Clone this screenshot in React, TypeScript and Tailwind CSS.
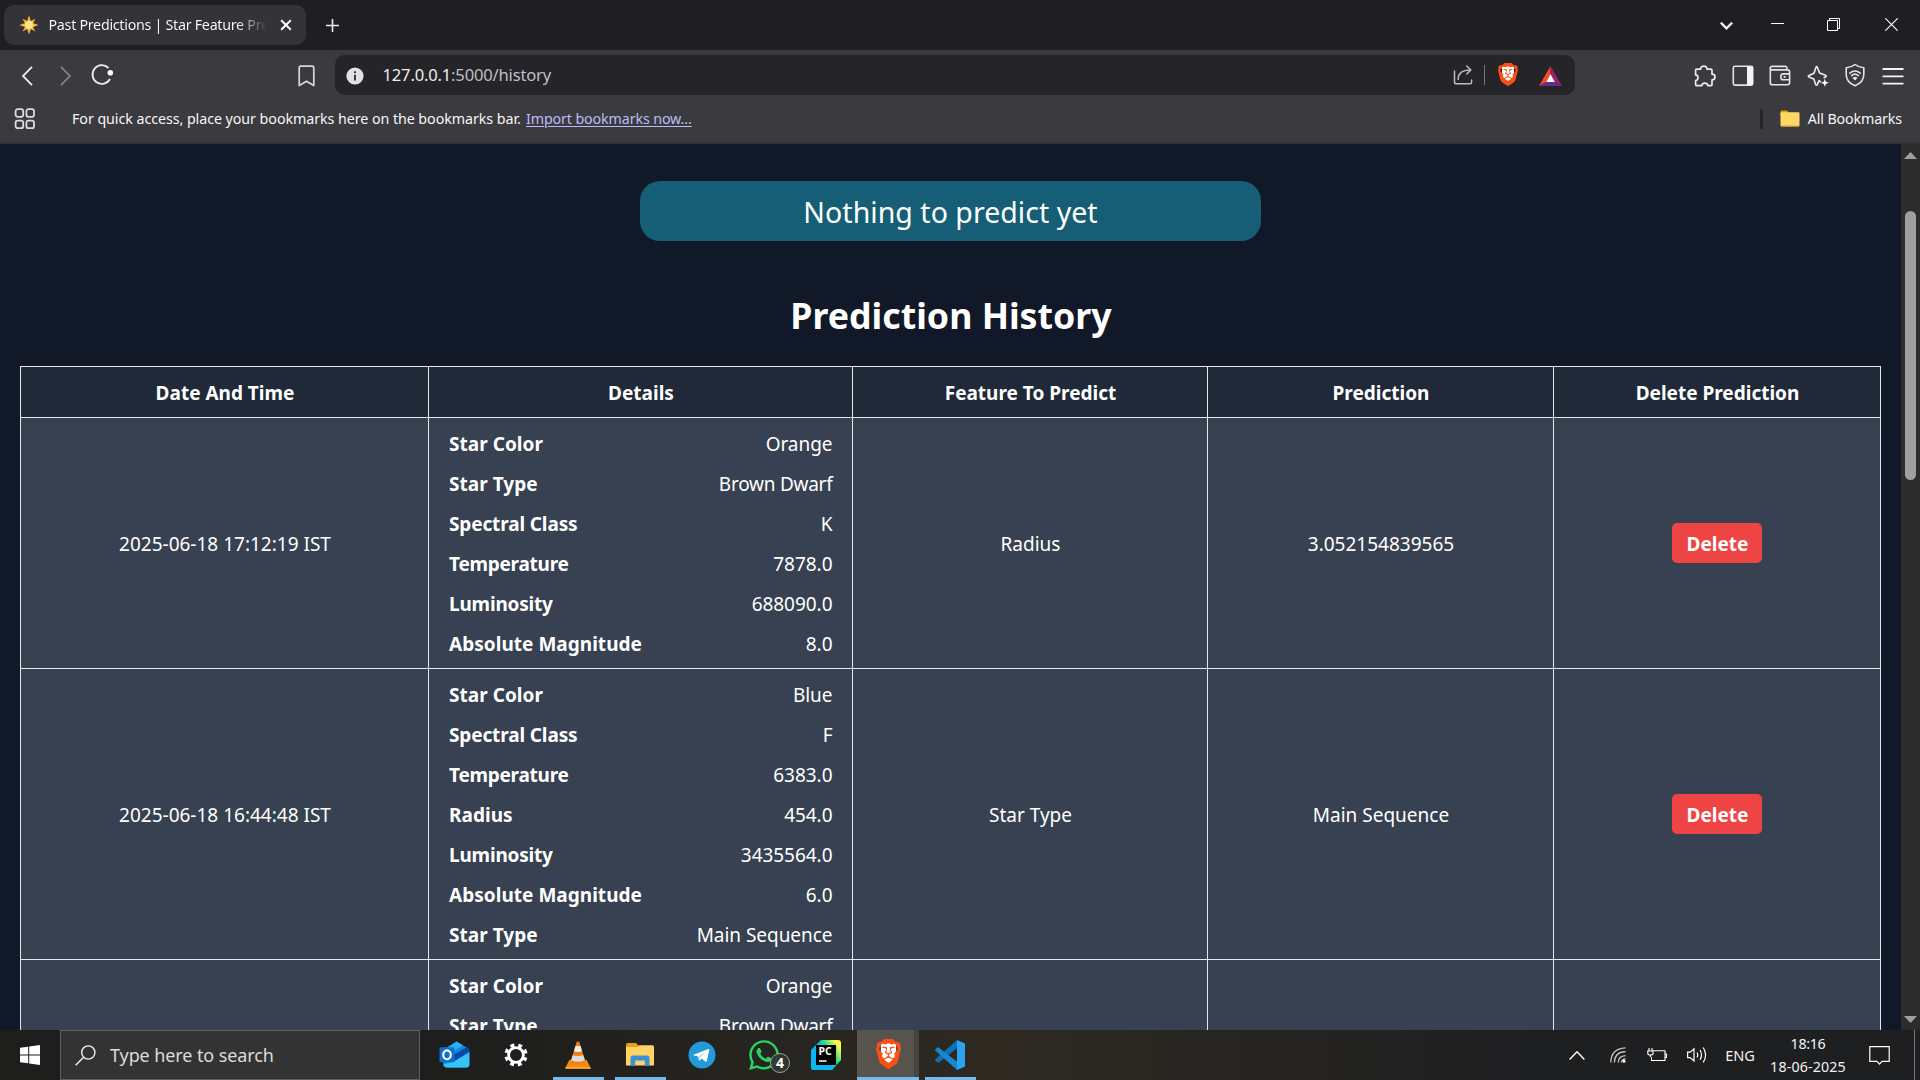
import type { ReactNode } from 'react';
import { SiBrave } from 'react-icons/si';
import { FaWhatsapp } from 'react-icons/fa';

type Detail = [label: string, value: string];

interface Prediction {
  time: string;
  details: Detail[];
  feature: string;
  result: string;
}

const predictions: Prediction[] = [
  {
    time: '2025-06-18 17:12:19 IST',
    details: [
      ['Star Color', 'Orange'],
      ['Star Type', 'Brown Dwarf'],
      ['Spectral Class', 'K'],
      ['Temperature', '7878.0'],
      ['Luminosity', '688090.0'],
      ['Absolute Magnitude', '8.0'],
    ],
    feature: 'Radius',
    result: '3.052154839565',
  },
  {
    time: '2025-06-18 16:44:48 IST',
    details: [
      ['Star Color', 'Blue'],
      ['Spectral Class', 'F'],
      ['Temperature', '6383.0'],
      ['Radius', '454.0'],
      ['Luminosity', '3435564.0'],
      ['Absolute Magnitude', '6.0'],
      ['Star Type', 'Main Sequence'],
    ],
    feature: 'Star Type',
    result: 'Main Sequence',
  },
];

const headers = ['Date And Time', 'Details', 'Feature To Predict', 'Prediction', 'Delete Prediction'];

// Letter spacing for the words that set wider than their neighbours.
const tracking: Record<string, string> = {
  Temperature: 'tracking-[-0.25px]',
  Luminosity: 'tracking-[-0.2px]',
  'Spectral Class': 'tracking-[-0.13px]',
  'Brown Dwarf': 'tracking-[-0.25px]',
};

function Lion({ className }: { className: string }) {
  return (
    <span className={`relative block shrink-0 ${className}`}>
      <span className="absolute inset-x-[20%] top-[14%] bottom-[20%] rounded-b-full bg-white" />
      <SiBrave className="relative h-full w-full text-[#fb4f14]" preserveAspectRatio="none" viewBox="1.8 0 20.4 24" />
    </span>
  );
}

function TabStrip() {
  return (
    <div className="flex h-[50px] items-center bg-[#1f1e23] pl-1">
      <div className="flex h-10 w-[302px] items-center rounded-[10px] bg-[#343338] pl-[15px]">
        <svg className="mt-[-1px] size-5 shrink-0" viewBox="0 0 20 20">
          <path d="M10 .5 11.9 6 16.4 3.7 14.1 8.2 19.6 10 14.1 11.9 16.4 16.4 11.9 14.1 10 19.6 8.1 14.1 3.6 16.4 5.9 11.9 .4 10 5.9 8.2 3.6 3.7 8.1 6Z" fill="#f6b93b" />
          <circle cx="10" cy="10" r="4" fill="#fde48a" />
        </svg>
        <span className="ml-[9.5px] w-[218px] overflow-hidden bg-gradient-to-r from-white from-86% to-transparent to-100% bg-clip-text text-[14.25px] leading-5 tracking-[-0.27px] whitespace-nowrap text-transparent">
          Past Predictions | Star Feature Predictor
        </span>
        <svg className="ml-[13px] size-3 shrink-0" viewBox="0 0 12 12" stroke="#fff" strokeWidth="2">
          <path d="M1.2 1.2 10.8 10.8M10.8 1.2 1.2 10.8" />
        </svg>
      </div>
      <svg className="ml-[19px] size-[15px]" viewBox="0 0 15 15" stroke="#eee" strokeWidth="1.6">
        <path d="M7.5 1v13M1 7.5h13" />
      </svg>
      <div className="ml-auto flex items-center pr-[22px]">
        <svg className="h-[15px] w-[15px]" viewBox="0 0 15 15" fill="none" stroke="#f2f2f2" strokeWidth="2.3">
          <path d="M1.8 4.6 7.5 10.3 13.2 4.6" />
        </svg>
        <svg className="-mt-1 ml-[37px] h-[13px] w-[13px]" viewBox="0 0 13 13" fill="#fff">
          <path d="M0 6h13v1H0z" />
        </svg>
        <svg className="-mt-px ml-[43px] h-[13px] w-[13px]" viewBox="0 0 13 13" fill="none" stroke="#fff">
          <path d="M.5 2.5h10v10H.5zM2.5 2.5v-2h10v10h-2" />
        </svg>
        <svg className="-mt-px ml-[45px] h-[13px] w-[13px]" viewBox="0 0 13 13" stroke="#fff" strokeWidth="1.1">
          <path d="M.3.3 12.7 12.7M12.7.3.3 12.7" />
        </svg>
      </div>
    </div>
  );
}

function Toolbar() {
  return (
    <div className="flex h-[50px] items-center pl-[21px]">
      <svg className="mt-px h-5 w-3" viewBox="0 0 12 20" fill="none" stroke="#ececee" strokeWidth="1.8">
        <path d="M11 .8 2 10 11 19.2" />
      </svg>
      <svg className="mt-px ml-[27px] h-5 w-3" viewBox="0 0 12 20" fill="none" stroke="#807f84" strokeWidth="1.8">
        <path d="M1 .8 10 10 1 19.2" />
      </svg>
      <svg className="ml-[19px] h-[22px] w-[23px]" viewBox="0 0 23 22" fill="none" stroke="#ececee" strokeWidth="1.8">
        <path d="M17.5 4A9.3 9.3 0 1 0 19 15" />
        <circle cx="19.3" cy="8.8" r="2.8" fill="#fff" stroke="none" />
      </svg>
      <svg className="mt-px ml-[184px] h-[22px] w-[17px]" viewBox="0 0 17 22" fill="none" stroke="#d8d8da" strokeWidth="1.7" strokeLinejoin="round">
        <path d="M1.2 3Q1.2 1.2 3 1.2H14Q15.8 1.2 15.8 3V20.5L8.5 16.2 1.2 20.5Z" />
      </svg>
      <div className="ml-5 flex h-10 w-[1240px] items-center rounded-[10px] bg-[#252429]">
        <svg className="mt-px ml-[11px] size-[18px]" viewBox="0 0 18 18">
          <circle cx="9" cy="9" r="8.6" fill="#e2e1e6" />
          <path d="M8 4.3h2v2H8zM8 7.8h2v5.6H8z" fill="#39383d" />
        </svg>
        <span className="ml-[18.5px] text-[16.6px] leading-6 tracking-[-0.19px] text-[#bfbec3]">
          <span className="text-[#eeeef0]">127.0.0.1</span>:5000/history
        </span>
        <svg className="mr-[0.5px] ml-auto size-5" viewBox="0 0 20 20" fill="none" stroke="#bdbcc1" strokeWidth="1.5" strokeLinecap="round" strokeLinejoin="round">
          <path d="M1.5 6V17Q1.5 18.8 3.3 18.8H17Q18.6 18.8 18.6 17V15M5.2 14.5Q5 5 17.5 5M13.8 1 17.8 5 13.8 9" />
        </svg>
        <span className="ml-[10px] h-5 w-px bg-[#77767b]" />
        <Lion className="mt-[-2px] ml-[13px] h-[23px] w-5" />
        <svg className="ml-[21.5px] mt-px h-5 w-[23px]" viewBox="0 0 23 20">
          <path d="M11.5 0 0 20 7.4 15.8 11.5 8Z" fill="#ff4724" />
          <path d="M11.5 0 23 20 15.6 15.8 11.5 8Z" fill="#9e1f63" />
          <path d="M0 20H23L15.6 15.8H7.4Z" fill="#662d91" />
          <path d="M11.5 8 7.2 15.9H15.8Z" fill="#fff" />
        </svg>
        <span className="w-[13px]" />
      </div>
      <div className="ml-auto flex items-center gap-[15.6px] pt-px pr-4">
        <svg className="size-[22px]" viewBox="0 0 22 22" fill="none" stroke="#ececee" strokeWidth="1.7" strokeLinejoin="round">
          <path d="M1.6 5.4Q1.6 4.2 2.8 4.2H6.6C6.2 .2 13.4.2 13 4.2H16.6Q18 4.2 18 5.6V9.2C22 9.2 22 14.8 18 14.9V19.4Q18 20.6 16.8 20.6H13.8C13.3 17.2 8.3 17.2 7.8 20.6H2.8Q1.6 20.6 1.6 19.4V15.6C4.8 15.3 4.8 10.2 1.6 9.9Z" />
        </svg>
        <svg className="size-[22px]" viewBox="0 0 22 22" fill="none" stroke="#e4e4e6" strokeWidth="1.6">
          <rect x="1.3" y="1.3" width="19.4" height="18.8" rx="1.5" />
          <path d="M15 1.3H21V20.1H15Z" fill="#f4f4f4" stroke="none" />
        </svg>
        <svg className="size-[22px]" viewBox="0 0 22 22" fill="none" stroke="#e4e4e6" strokeWidth="1.6" strokeLinejoin="round">
          <path d="M1.3 3.4V17.4Q1.3 19.8 3.5 19.8H18.5Q20.6 19.8 20.6 17.6V7.1Q20.6 4.9 18.5 4.9H3Q1.3 4.9 1.3 3.2 1.3 1.4 3 1.4H16.5Q18 1.4 18 3.1V4.8" />
          <path d="M20.6 8.9H14.2Q11.8 8.9 11.8 11.9T14.2 14.8H20.6M14.6 11.9h2" />
        </svg>
        <svg className="size-[22px]" viewBox="0 0 22 22" fill="none" stroke="#ececee" strokeWidth="1.6" strokeLinejoin="round">
          <path d="M14 17.2 12 15.6 10.3 19.6Q9.5 21 8.7 19.6L6.8 14 2 12Q.6 11.2 2 10.4L7 8.3 8.9 2.5Q9.6.8 10.4 2.5L12.6 8 18.4 10.3Q20 11.1 18.4 12L16.6 13" />
          <path d="M17.8 13.8 18.8 16.8 21.8 17.8 18.8 18.9 17.8 21.8 16.8 18.9 13.8 17.8 16.8 16.8Z" fill="#fff" stroke="none" />
        </svg>
        <svg className="mt-[-2px] h-6 w-[22px]" viewBox="0 0 22 24" fill="none" stroke="#e4e4e6" strokeWidth="1.6" strokeLinecap="round" strokeLinejoin="round">
          <path d="M11 1.5Q14.5 4.4 19.8 4.8V11.5Q19.8 19 11 22.8 2.2 19 2.2 11.5V4.8Q7.5 4.4 11 1.5Z" />
          <path d="M5.8 10.2Q11 5.8 16.2 10.2M7.6 12.6Q11 9.8 14.4 12.6M9.5 15.2Q11 14 12.5 15.2" />
          <circle cx="11" cy="16" r="1.2" fill="#e4e4e6" stroke="none" />
        </svg>
        <svg className="size-[22px]" viewBox="0 0 22 22" stroke="#f4f4f4" strokeWidth="1.8">
          <path d="M.5 4H21.5M.5 11.3H21.5M.5 18.6H21.5" />
        </svg>
      </div>
    </div>
  );
}

function BookmarksBar() {
  return (
    <div className="flex h-11 items-center border-b-2 border-[#323136] pb-[5px] pl-[14px] text-[14.25px] leading-5 text-[#f6f6f7]">
      <svg className="mt-px size-[22px]" viewBox="0 0 22 22" fill="none" stroke="#dcdcde" strokeWidth="1.8">
        <rect x="1.6" y="1.2" width="7.6" height="7.6" rx="2" />
        <rect x="12.4" y="1.2" width="7.6" height="7.6" rx="2" />
        <rect x="1.6" y="12.6" width="7.6" height="7.6" rx="2" />
        <rect x="12.4" y="12.6" width="7.6" height="7.6" rx="2" />
      </svg>
      <span className="ml-[36px] w-[454px] tracking-[-0.055px] whitespace-nowrap">
        For quick access, place your bookmarks here on the bookmarks bar.
      </span>
      <a className="tracking-[-0.12px] text-[#b9bdf8] underline underline-offset-2">Import bookmarks now...</a>
      <div className="ml-auto flex items-center pr-[18px]">
        <span className="h-5 w-[3px] rounded-full bg-[#242328]" />
        <svg className="mr-[7.5px] ml-[17px] h-[17px] w-5" viewBox="0 0 20 17">
          <path d="M.5 2Q.5.5 2 .5H7L9 2.5V6H.5Z" fill="#dfa000" />
          <rect x=".5" y="2.3" width="19" height="14.2" rx="1.2" fill="#ffd766" />
          <path d="M1 15.8h18" stroke="#e9b13a" />
        </svg>
        <span className="tracking-[-0.13px]">All Bookmarks</span>
      </div>
    </div>
  );
}

function DetailList({ details }: { details: Detail[] }) {
  return (
    <dl className="bg-[#374151] py-[5px] pr-[19.5px] pl-5">
      {details.map(([label, value]) => (
        <div key={label} className="flex h-10 items-center justify-between pt-[2px]">
          <dt className={`font-bold ${tracking[label] ?? 'tracking-[0.03px]'}`}>{label}</dt>
          <dd className={tracking[value] ?? 'tracking-[-0.04px]'}>{value}</dd>
        </div>
      ))}
    </dl>
  );
}

function Cell({ children }: { children?: ReactNode }) {
  return <div className="flex items-center justify-center bg-[#374151] pt-px pl-px">{children}</div>;
}

function PredictionPage() {
  return (
    <main className="flex min-w-0 flex-1 flex-col items-center overflow-hidden bg-[#111827] px-5 pt-[37px] text-[19px] leading-[30px] text-white">
      <div className="flex h-[60px] w-[621px] shrink-0 items-center justify-center rounded-[20px] bg-[#155e75] pt-[2px] text-[28.5px] tracking-[0.03px]">
        Nothing to predict yet
      </div>
      <h1 className="mt-[49px] h-[50px] shrink-0 pl-px text-[35.7px] leading-[50px] font-bold">Prediction History</h1>
      <div className="mt-[26px] grid w-[1861px] shrink-0 grid-cols-[407px_423px_354px_345px_326px] grid-rows-[50px_250px_290px_250px] gap-px bg-[#e5e7eb] p-px">
        {headers.map((h) => (
          <div key={h} className="flex items-center justify-center bg-[#1f2937] pt-[2px] pl-px font-bold">
            {h}
          </div>
        ))}
        {predictions.map((p) => (
          <div key={p.time} className="contents">
            <Cell>{p.time}</Cell>
            <DetailList details={p.details} />
            <Cell>{p.feature}</Cell>
            <Cell>{p.result}</Cell>
            <Cell>
              <button className="mt-[-1px] mr-px flex h-10 w-[90px] items-center justify-center rounded-[5px] bg-[#ef4444] pt-[2px] pl-px font-bold">
                Delete
              </button>
            </Cell>
          </div>
        ))}
        <Cell />
        <DetailList details={predictions[0].details} />
        <Cell />
        <Cell />
        <Cell />
      </div>
    </main>
  );
}

function Scrollbar() {
  return (
    <div className="flex w-[19px] flex-col items-center bg-[#2c2c2c]">
      <svg className="mt-2 h-[7px] w-[13px]" viewBox="0 0 13 7" fill="#9f9f9f">
        <path d="M6.5 0 13 7H0Z" />
      </svg>
      <div className="mt-[52px] h-[269px] w-[11px] rounded-full bg-[#9f9f9f]" />
      <svg className="mt-auto mb-[7px] h-[7px] w-[13px]" viewBox="0 0 13 7" fill="#9f9f9f">
        <path d="M6.5 7 13 0H0Z" />
      </svg>
    </div>
  );
}

function TaskItem({ running, active, children }: { running?: boolean; active?: boolean; children: ReactNode }) {
  return (
    <div className={`flex w-[62px] flex-col items-center ${active ? 'bg-gradient-to-r from-[#57544e] from-92% to-[#45443f] to-92%' : ''}`}>
      <div className="flex h-[47px] items-center justify-center pt-[2px]">{children}</div>
      {running && <span className={active ? 'h-[3px] w-full bg-[#76b9ed]' : 'h-[3px] w-[51px] bg-[#76b9ed]'} />}
    </div>
  );
}

function Taskbar() {
  return (
    <footer className="flex h-[50px] shrink-0 bg-gradient-to-r from-[#1e1e1c] from-25% via-[#2e2a22] via-52% to-[#1e1f21] to-80%">
      <div className="flex w-[60px] items-center justify-center">
        <svg className="h-5 w-5" viewBox="0 0 20 20" fill="#fff">
          <path d="M0 2.8 8.2 1.7V9.5H0ZM9.2 1.5 20 0V9.5H9.2ZM0 10.5H8.2V18.3L0 17.2ZM9.2 10.5H20V20L9.2 18.5Z" />
        </svg>
      </div>
      <div className="flex w-[360px] items-center border border-[#5f5f5f] bg-[#333] pl-[14px]">
        <svg className="size-[21px]" viewBox="0 0 21 21" fill="none" stroke="#f2f2f2" strokeWidth="1.4">
          <circle cx="13.3" cy="7.5" r="6.6" />
          <path d="M8.6 12.2.6 20.3" />
        </svg>
        <span className="ml-[14px] text-[18px] leading-6 tracking-[-0.1px] text-[#dcdcdc]">Type here to search</span>
      </div>
      <div className="ml-[3px] flex">
        <TaskItem>
          <svg className="h-[27px] w-[31px]" viewBox="0 0 31 27">
            <path d="M4 9 17.5.5 30 8V23Q30 26.5 27 26.5H7Q4 26.5 4 23Z" fill="#1389dc" />
            <path d="M6 8 17.5.5 24 4.3 10 13Z" fill="#29b0ee" />
            <path d="M14 14 28 6.2 30.5 8.5V11L16 21Z" fill="#0d47a1" />
            <path d="M30.5 11V23Q30.5 26.5 27 26.5H8Q5 26.5 5 23L14 21Z" fill="#35c4f5" />
            <rect x=".5" y="6.3" width="15" height="15" rx="1.5" fill="#0f6fd0" />
            <ellipse cx="8" cy="13.8" rx="3.8" ry="4.4" fill="none" stroke="#fff" strokeWidth="2.1" />
          </svg>
        </TaskItem>
        <TaskItem>
          <svg className="mr-px size-6" viewBox="-12 -12 24 24" fill="none" stroke="#fff">
            <circle r="7.4" strokeWidth="2.8" />
            <circle r="9.8" strokeWidth="3.6" strokeDasharray="3.9 3.797" strokeDashoffset="1.95" transform="rotate(22.5)" />
          </svg>
        </TaskItem>
        <TaskItem running>
          <svg className="h-7 w-[26px]" viewBox="0 0 26 28">
            <path d="M4.2 19H21.8L25.8 27.5H.2Z" fill="#f28a12" />
            <path d="M.8 26H25.2L25.8 27.8H.2Z" fill="#ffad2e" />
            <path d="M11.8.5H14.2L20.2 20Q19 22.5 13 22.5T5.8 20Z" fill="#f17b0c" />
            <path d="M10.5 5H15.5L17.1 10.3Q13 11.6 8.9 10.3Z" fill="#eee" />
            <path d="M7.7 14.2Q13 15.8 18.3 14.2L19.9 19.2Q13 22.2 6.1 19.2Z" fill="#ddd" />
          </svg>
        </TaskItem>
        <TaskItem running>
          <svg className="h-[25px] w-7" viewBox="0 0 28 25">
            <path d="M0 3Q0 1 2 1H10L13 4H26V8H0Z" fill="#e5a311" />
            <path d="M0 5H11L13.5 3.2H26.5Q28 3.2 28 5V23.5H0Z" fill="#ffd263" />
            <path d="M4.5 24V16Q4.5 13.5 7 13.5H21Q23.5 13.5 23.5 16V24H18.8V18.5H9.2V24Z" fill="#3d8fd8" />
          </svg>
        </TaskItem>
        <TaskItem>
          <svg className="size-7" viewBox="0 0 28 28">
            <circle cx="14" cy="14" r="13.5" fill="#239bd8" />
            <path d="M5.5 13.8 20.5 8Q21.5 7.8 21.3 9L18.8 20Q18.4 21 17.3 20.4L13.6 17.6 11.8 19.4Q11 20 10.8 18.8L10 15.6 6 14.6Q5 14.2 5.5 13.8Z" fill="#fff" />
            <path d="M10.3 15.6 18.4 10.5 12.2 16.4 11.6 19Z" fill="#b9d9ec" />
          </svg>
        </TaskItem>
        <TaskItem>
          <div className="relative">
            <FaWhatsapp className="size-[34px] text-[#25d366]" />
            <span className="absolute top-[15px] left-[23px] flex size-5 items-center justify-center rounded-full border border-[#a0a09e] bg-[#333532]/90 text-[14px] font-bold text-white">
              4
            </span>
          </div>
        </TaskItem>
        <TaskItem>
          <svg className="size-[30px]" viewBox="0 0 30 30">
            <defs>
              <linearGradient id="pycharm" x1="0" y1="0.8" x2="1" y2="0.1">
                <stop offset=".4" stopColor="#07c3f2" />
                <stop offset=".62" stopColor="#21d789" />
                <stop offset=".9" stopColor="#fcf84a" />
              </linearGradient>
            </defs>
            <path d="M10 0H27Q30 0 30 3V20L21 30H3Q0 30 0 27V10Z" fill="url(#pycharm)" />
            <path d="M0 11 11 0 6 20 22 26 20 30H3Q0 30 0 27Z" fill="#0bb5f0" />
            <rect x="5" y="5" width="20" height="20" fill="#000" />
            <path d="M8 21H15.5" stroke="#fff" strokeWidth="1.5" />
            <text x="7.4" y="15.3" fill="#fff" fontSize="10.5" fontWeight="700" fontFamily="Noto Sans, sans-serif">PC</text>
          </svg>
        </TaskItem>
        <TaskItem running active>
          <Lion className="mt-[-1px] h-[30px] w-[25px]" />
        </TaskItem>
        <TaskItem running>
          <svg className="size-[30px]" viewBox="0 0 30 30">
            <path d="M22 0 30 3.5V26.5L22 30Z" fill="#2aa3f0" />
            <path d="M22 0V8.2L4 22.3Q3 23 2.2 22.3L.5 20.8Q-.3 20 .5 19.2Z" fill="#0d70b8" />
            <path d="M22 30V21.8L4 7.7Q3 7 2.2 7.7L.5 9.2Q-.3 10 .5 10.8Z" fill="#1787d0" />
          </svg>
        </TaskItem>
      </div>
      <div className="ml-auto flex items-center text-[14.25px] leading-5 text-[#f2f2f2]">
        <svg className="h-[11px] w-4" viewBox="0 0 16 11" fill="none" stroke="#fff" strokeWidth="1.4">
          <path d="M.6 9.5 8 1.8 15.4 9.5" />
        </svg>
        <svg className="ml-[25px] size-4" viewBox="0 0 16 16" fill="none" stroke="#d0d0d0" strokeWidth="1.2">
          <path d="M.8 15.5Q1 1.5 15.5.8M4.4 15.5Q4.6 5 15.5 4.6M8.2 15.5Q8.4 9 15.5 8.6M11.4 15.5Q11.6 12 15.5 11.8" />
          <circle cx="14" cy="14.3" r="1.5" fill="#fff" stroke="none" />
        </svg>
        <svg className="ml-[21px] h-[14px] w-5" viewBox="0 0 20 14" fill="none" stroke="#fff" strokeWidth="1.1">
          <path d="M6 2.8H18V12.5H4.5V9M18.5 6h1v3.5h-1M2 0V3M5 0V3M.8 3H6V5.5Q6 7 3.4 7T.8 5.5ZM3.4 7V9" />
        </svg>
        <svg className="ml-5 h-[18px] w-5" viewBox="0 0 20 18" fill="none" stroke="#fff" strokeWidth="1.2">
          <path d="M.6 6.2H3.2L7 2.8V15L3.2 11.6H.6Z" />
          <path d="M10 6.5Q11.5 9 10 11.3M13 4Q16 9 13 13.8M16.2 1.5Q21 9 16.2 16.4" />
        </svg>
        <span className="ml-[18px] text-[14.6px]">ENG</span>
        <div className="ml-[14px] flex h-full w-[78px] flex-col items-center pt-[2px] leading-[23px]">
          <span className="tracking-[-0.3px]">18:16</span>
          <span className="tracking-[0.14px]">18-06-2025</span>
        </div>
        <svg className="ml-[22px] size-[21px]" viewBox="0 0 21 21" fill="none" stroke="#fff" strokeWidth="1.2">
          <path d="M.8 1.6H20.2V16.4H13L10.5 19.2 8 16.4H.8Z" />
        </svg>
        <span className="mr-[5px] ml-6 h-full w-px bg-[#777]" />
      </div>
    </footer>
  );
}

export default function App() {
  return (
    <div className="flex h-[1080px] w-[1920px] flex-col overflow-hidden font-['Noto_Sans','Open_Sans',sans-serif]">
      <header className="shrink-0 bg-[#3b3a3f]">
        <TabStrip />
        <Toolbar />
        <BookmarksBar />
      </header>
      <div className="flex min-h-0 flex-1">
        <PredictionPage />
        <Scrollbar />
      </div>
      <Taskbar />
    </div>
  );
}
